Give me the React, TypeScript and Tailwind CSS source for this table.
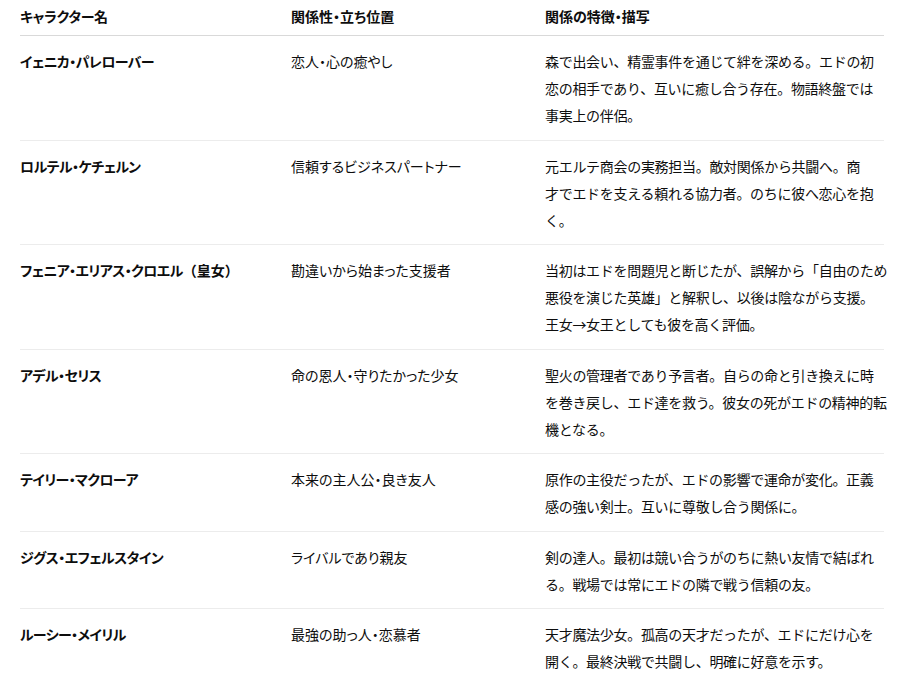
import React from "react";

interface Row {
  name: string;
  note?: string;
  role: string;
  desc: string[];
}

// 説明文は参照画像の改行位置に合わせて行ごとに分けている
const ROWS: Row[] = [
  {
    name: "イェニカ・パレローバー",
    role: "恋人・心の癒やし",
    desc: ["森で出会い、精霊事件を通じて絆を深める。エドの初", "恋の相手であり、互いに癒し合う存在。物語終盤では", "事実上の伴侶。"],
  },
  {
    name: "ロルテル・ケチェルン",
    role: "信頼するビジネスパートナー",
    desc: ["元エルテ商会の実務担当。敵対関係から共闘へ。商", "才でエドを支える頼れる協力者。のちに彼へ恋心を抱", "く。"],
  },
  {
    name: "フェニア・エリアス・クロエル",
    note: "（皇女）",
    role: "勘違いから始まった支援者",
    desc: ["当初はエドを問題児と断じたが、誤解から「自由のため", "悪役を演じた英雄」と解釈し、以後は陰ながら支援。", "王女→女王としても彼を高く評価。"],
  },
  {
    name: "アデル・セリス",
    role: "命の恩人・守りたかった少女",
    desc: ["聖火の管理者であり予言者。自らの命と引き換えに時", "を巻き戻し、エド達を救う。彼女の死がエドの精神的転", "機となる。"],
  },
  {
    name: "テイリー・マクローア",
    role: "本来の主人公・良き友人",
    desc: ["原作の主役だったが、エドの影響で運命が変化。正義", "感の強い剣士。互いに尊敬し合う関係に。"],
  },
  {
    name: "ジグス・エフェルスタイン",
    role: "ライバルであり親友",
    desc: ["剣の達人。最初は競い合うがのちに熱い友情で結ばれ", "る。戦場では常にエドの隣で戦う信頼の友。"],
  },
  {
    name: "ルーシー・メイリル",
    role: "最強の助っ人・恋慕者",
    desc: ["天才魔法少女。孤高の天才だったが、エドにだけ心を", "開く。最終決戦で共闘し、明確に好意を示す。"],
  },
];

const App = () => {
  return (
    <div className="min-h-screen bg-white px-5 text-[#0d0d0d] font-['Noto_Sans_CJK_JP','Noto_Sans',sans-serif]">
      <table className="w-[864px] table-fixed border-collapse text-[14px] leading-[27px]">
        <colgroup>
          <col className="w-[271px]" />
          <col className="w-[254px]" />
          <col className="w-[339px]" />
        </colgroup>
        <thead>
          <tr className="border-b border-[#d9d9d9] text-left">
            <th className="pt-[3px] pb-[5px] font-semibold tracking-[-0.3px] [font-feature-settings:'palt']">キャラクター名</th>
            <th className="pt-[3px] pb-[5px] font-semibold [font-feature-settings:'palt']">関係性・立ち位置</th>
            <th className="pt-[3px] pb-[5px] font-semibold [font-feature-settings:'palt']">関係の特徴・描写</th>
          </tr>
        </thead>
        <tbody>
          {ROWS.map((r) => (
            <tr key={r.name} className="border-b border-[#ececec] align-top last:border-b-0">
              <td className="pt-[12px] pb-[10.5px] font-semibold">
                <span className="tracking-[-0.6px] [font-feature-settings:'palt']">{r.name}</span>
                {r.note && <span>{r.note}</span>}
              </td>
              <td className="pt-[12px] pb-[10.5px] [font-feature-settings:'palt']">{r.role}</td>
              <td className="pt-[12px] pb-[10.5px] whitespace-nowrap tracking-[-0.3px]">
                {r.desc.map((line, i) => (
                  <div key={i}>{line}</div>
                ))}
              </td>
            </tr>
          ))}
        </tbody>
      </table>
    </div>
  );
};

export default App;
